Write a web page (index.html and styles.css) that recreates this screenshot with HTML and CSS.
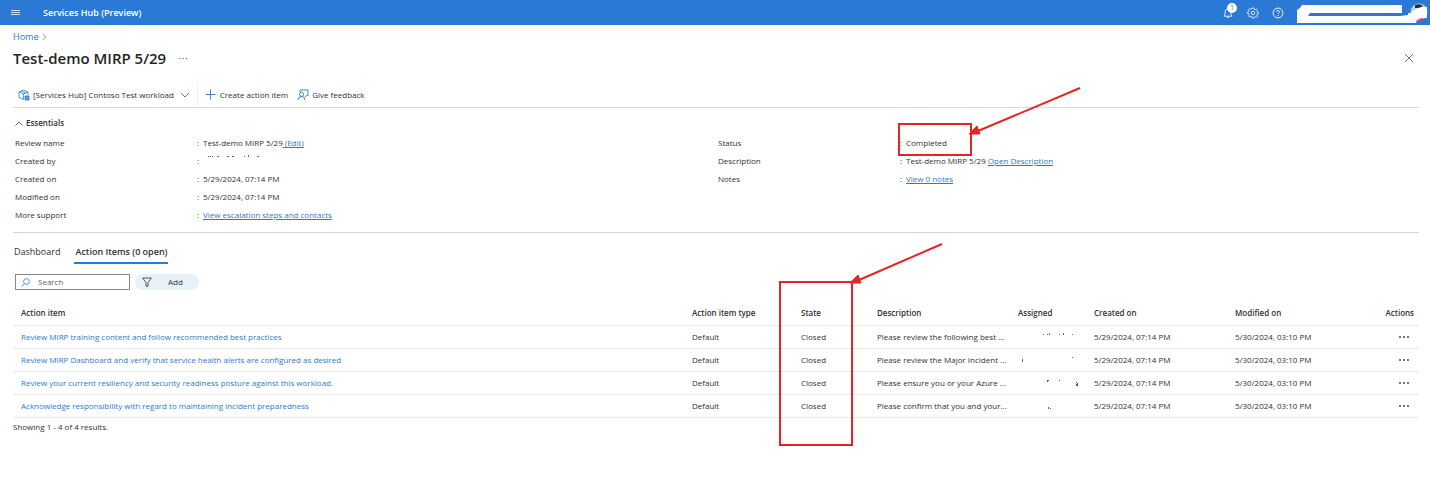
FILE: index.html
```html
<!DOCTYPE html>
<html lang="en">
<head>
    <meta charset="UTF-8">
    <meta name="viewport" content="width=device-width, initial-scale=1.0">
    <title>Services Hub (Preview)</title>
    <link rel="stylesheet" href="styles.css">
</head>
<body>
    <header class="topbar">
        <button class="icon-btn menu-btn" aria-label="Menu">
            <svg width="10" height="8" viewBox="0 0 10 8" stroke="#c9dff7" fill="none"><path d="M0 1.500h9M0 3.500h9M0 5.500h9"/></svg>
        </button>
        <span class="brand">Services Hub (Preview)</span>
        <div class="topbar-actions">
            <button class="icon-btn" aria-label="Notifications">
                <svg width="12" height="12" viewBox="0 0 12 12" stroke="#fff" fill="none" stroke-width=".8"><path d="M2 9.200h8L9 7.600V5A3 3 0 0 0 3 5v2.600zM4.800 9.400a1.200 1.200 0 0 0 2.400 0"/></svg>
                <span class="badge">1</span>
            </button>
            <button class="icon-btn" aria-label="Settings">
                <svg width="12" height="12" viewBox="0 0 12 12" stroke="#fff" fill="none" stroke-width=".8"><path d="M5.100 1h1.800l.3 1.400 1 .4 1.200-.8 1.200 1.200-.8 1.200.4 1 1.300.3v1.200l-1.300.3-.4 1 .8 1.200-1.200 1.200-1.200-.8-1 .4L6.900 11H5.100l-.3-1.400-1-.4-1.200.8L1.400 8.800l.8-1.200-.4-1L.5 6.300V5.100l1.300-.3.4-1-.8-1.200L2.600 1.400l1.200.8 1-.4z"/><circle cx="6" cy="6" r="1.700"/></svg>
            </button>
            <button class="icon-btn" aria-label="Help">
                <svg width="12" height="12" viewBox="0 0 12 12" stroke="#fff" fill="none" stroke-width=".9"><circle cx="6" cy="6" r="4.900"/><path d="M4.500 4.900C4.500 3 7.500 3 7.500 4.800 7.500 5.900 6 5.900 6 7.200M6 8.100v.9"/></svg>
            </button>
            <div class="account">
                <svg width="133" height="25" viewBox="0 0 133 25">
                    <circle cx="122" cy="12" r="8.500" fill="#b9d3dc"/>
                    <path d="M118 5q5-2 8 1l-3 2h-5z" fill="#22303a"/>
                    <path d="M122 17h4v4h-4z" fill="#c04a72"/>
                    <path d="M5 5h100v8H13l-2 3h92l8-1v-2h3l2-2 5-3 4-1h5v11h-4l-6 1-1 4H0V10l3-2z" fill="#fff"/>
                </svg>
            </div>
        </div>
    </header>

    <main class="page">
        <nav class="breadcrumb">
            <a href="#">Home</a>
            <svg width="5" height="8" viewBox="0 0 5 8" stroke="#777" fill="none" stroke-width=".8"><path d="M.6 1l3.200 3L.6 7"/></svg>
        </nav>

        <div class="title-row">
            <h1>Test-demo MIRP 5/29</h1>
            <button class="icon-btn" aria-label="More">
                <svg width="9" height="3" viewBox="0 0 9 3" fill="#666"><path d="M0 1h1.200v1H0zM3.400 1h1.200v1H3.400zM6.800 1H8v1H6.800z"/></svg>
            </button>
            <button class="icon-btn close-btn" aria-label="Close">
                <svg width="10" height="10" viewBox="0 0 10 10" stroke="#666" fill="none" stroke-width=".9"><path d="M1 1l8 8M9 1L1 9"/></svg>
            </button>
        </div>

        <div class="toolbar">
            <button class="tool workload">
                <svg width="12" height="12" viewBox="0 0 12 12" stroke="#2b79d3" fill="none" stroke-width=".8"><path d="M6 10.500L1 8.500V3L5.500 1 10 3v3M1 3l4.500 2L10 3M5.500 5v5M3 2l4.500 2"/><path d="M7 7h4v4H7z" fill="#5d9ce6"/></svg>
                <span>[Services Hub] Contoso Test workload</span>
                <svg width="10" height="6" viewBox="0 0 10 6" stroke="#666" fill="none" stroke-width=".9"><path d="M1 1l4 4 4-4"/></svg>
            </button>
            <button class="tool">
                <svg width="12" height="12" viewBox="0 0 12 12" stroke="#2b79d3" fill="none" stroke-width=".9"><path d="M5.500.500v10M.500 5.500h10"/></svg>
                <span>Create action item</span>
            </button>
            <button class="tool">
                <svg width="12" height="12" viewBox="0 0 12 12" stroke="#2b79d3" fill="none" stroke-width=".9"><path d="M3 3V1h8v5.500H9.500L8 8M1 11q0-3.500 3.500-3.500T8 11"/><circle cx="4.500" cy="5.300" r="2.100"/></svg>
                <span>Give feedback</span>
            </button>
        </div>

        <section class="essentials">
            <button class="essentials-toggle">
                <svg width="8" height="5" viewBox="0 0 8 5" stroke="#555" fill="none" stroke-width=".9"><path d="M.5 4.500L4 1l3.500 3.500"/></svg>
                <span>Essentials</span>
            </button>
            <div class="properties">
                <dl>
                    <div class="prop"><dt>Review name</dt><dd>Test-demo MIRP 5/29<a href="#"> (Edit)</a></dd></div>
                    <div class="prop"><dt>Created by</dt><dd><svg width="60" height="8" viewBox="0 0 60 8" fill="#666"><path d="M5 1h1v1H5zM7 1h1v1H7zM9 1h1v1H9zM14 1h2v1h-2zM24 1h2v1h-2zM29 1h2v1h-2zM41 1h1v1h-1zM45 0h1v2h-1zM54 1h2v1h-2z"/></svg></dd></div>
                    <div class="prop"><dt>Created on</dt><dd>5/29/2024, 07:14 PM</dd></div>
                    <div class="prop"><dt>Modified on</dt><dd>5/29/2024, 07:14 PM</dd></div>
                    <div class="prop"><dt>More support</dt><dd><a href="#">View escalation steps and contacts</a></dd></div>
                </dl>
                <dl>
                    <div class="prop marked">
                        <dt>Status</dt><dd>Completed</dd>
                        <svg class="mark mark-status" width="190" height="80" viewBox="0 0 190 80"><path d="M3 41h72v31H3z"/><path d="M184 5L82 48"/><path class="head" d="M73 51l8-8 3 8z"/></svg>
                    </div>
                    <div class="prop"><dt>Description</dt><dd>Test-demo MIRP 5/29 <a href="#">Open Description</a></dd></div>
                    <div class="prop"><dt>Notes</dt><dd><a href="#">View 0 notes</a></dd></div>
                </dl>
            </div>
        </section>

        <div class="tabs" role="tablist">
            <button class="tab" role="tab">Dashboard</button>
            <button class="tab active" role="tab" aria-selected="true">Action Items (0 open)</button>
        </div>

        <div class="filters">
            <label class="search">
                <svg width="9" height="9" viewBox="0 0 9 9" stroke="#2b79d3" fill="none" stroke-width=".8"><circle cx="5.500" cy="3.500" r="2.900"/><path d="M3.400 5.600L.5 8.500"/></svg>
                <input type="text" placeholder="Search" aria-label="Search">
            </label>
            <button class="add-filter">
                <svg width="10" height="10" viewBox="0 0 10 10" stroke="#333" fill="none" stroke-width=".8"><path d="M.6 1h8.800L6 5.500v3.700H4V5.500z"/></svg>
                <span>Add</span>
            </button>
        </div>

        <table class="items">
            <colgroup>
                <col class="col-item"><col class="col-type"><col class="col-state"><col class="col-desc">
                <col class="col-assigned"><col class="col-date"><col class="col-date"><col class="col-actions">
            </colgroup>
            <thead>
                <tr>
                    <th>Action item</th>
                    <th>Action item type</th>
                    <th class="marked">State
                        <svg class="mark mark-state" width="170" height="210" viewBox="0 0 170 210"><path d="M3 42h72v163H3z"/><path d="M165 4L82 40"/><path class="head" d="M73 43l8-8 3 8z"/></svg>
                    </th>
                    <th>Description</th>
                    <th>Assigned</th>
                    <th>Created on</th>
                    <th>Modified on</th>
                    <th>Actions</th>
                </tr>
            </thead>
            <tbody>
                <tr>
                    <td><a href="#">Review MIRP training content and follow recommended best practices</a></td>
                    <td>Default</td>
                    <td>Closed</td>
                    <td>Please review the following best ...</td>
                    <td><svg width="62" height="10" viewBox="0 0 62 10" fill="#666"><path d="M25 2h1v1h-1zM29 2h1v1h-1zM31 1h1v2h-1zM41 2h1v1h-1zM45 1h1v2h-1zM54 2h1v1h-1z"/></svg></td>
                    <td>5/29/2024, 07:14 PM</td>
                    <td>5/30/2024, 03:10 PM</td>
                    <td><button class="icon-btn" aria-label="Actions"><svg width="10" height="4" viewBox="0 0 10 4" fill="#333"><circle cx="1" cy="2" r=".9"/><circle cx="5" cy="2" r=".9"/><circle cx="9" cy="2" r=".9"/></svg></button></td>
                </tr>
                <tr>
                    <td><a href="#">Review MIRP Dashboard and verify that service health alerts are configured as desired</a></td>
                    <td>Default</td>
                    <td>Closed</td>
                    <td>Please review the Major Incident ...</td>
                    <td><svg width="62" height="10" viewBox="0 0 62 10" fill="#666"><path d="M4 4h1v3H4zM54 2h1v1h-1z"/></svg></td>
                    <td>5/29/2024, 07:14 PM</td>
                    <td>5/30/2024, 03:10 PM</td>
                    <td><button class="icon-btn" aria-label="Actions"><svg width="10" height="4" viewBox="0 0 10 4" fill="#333"><circle cx="1" cy="2" r=".9"/><circle cx="5" cy="2" r=".9"/><circle cx="9" cy="2" r=".9"/></svg></button></td>
                </tr>
                <tr>
                    <td><a href="#">Review your current resiliency and security readiness posture against this workload.</a></td>
                    <td>Default</td>
                    <td>Closed</td>
                    <td>Please ensure you or your Azure ...</td>
                    <td><svg width="62" height="10" viewBox="0 0 62 10" fill="#555"><path d="M29 2h2v1h-1v1h-1zM41 2h1v1h-1zM58 4h1v1h1v3h-2V6h1V5h-1z"/></svg></td>
                    <td>5/29/2024, 07:14 PM</td>
                    <td>5/30/2024, 03:10 PM</td>
                    <td><button class="icon-btn" aria-label="Actions"><svg width="10" height="4" viewBox="0 0 10 4" fill="#333"><circle cx="1" cy="2" r=".9"/><circle cx="5" cy="2" r=".9"/><circle cx="9" cy="2" r=".9"/></svg></button></td>
                </tr>
                <tr>
                    <td><a href="#">Acknowledge responsibility with regard to maintaining incident preparedness</a></td>
                    <td>Default</td>
                    <td>Closed</td>
                    <td>Please confirm that you and your...</td>
                    <td><svg width="62" height="10" viewBox="0 0 62 10" fill="#666"><path d="M30 6h1v2h-1zM32 7h1v1h-1z"/></svg></td>
                    <td>5/29/2024, 07:14 PM</td>
                    <td>5/30/2024, 03:10 PM</td>
                    <td><button class="icon-btn" aria-label="Actions"><svg width="10" height="4" viewBox="0 0 10 4" fill="#333"><circle cx="1" cy="2" r=".9"/><circle cx="5" cy="2" r=".9"/><circle cx="9" cy="2" r=".9"/></svg></button></td>
                </tr>
            </tbody>
        </table>
        <p class="results">Showing 1 - 4 of 4 results.</p>
    </main>
</body>
</html>
```
FILE: styles.css
```css
* {
    box-sizing: border-box;
}
body {
    margin: 0;
    min-height: 100vh;
    background: #fff;
    color: #323130;
    font-family: "Open Sans", "Noto Sans", sans-serif;
    font-size: 8px;
    line-height: 12px;
}
button {
    padding: 0;
    border: none;
    background: none;
    color: inherit;
    font: inherit;
    cursor: pointer;
}
svg {
    display: block;
    flex: none;
}
a {
    color: #2b79d3;
}
.icon-btn {
    display: flex;
    align-items: center;
    position: relative;
}
.topbar {
    display: flex;
    align-items: center;
    height: 25px;
    padding-left: 11px;
    background: #2a79d5;
    color: #fff;
}
.brand {
    margin-left: 22px;
    font-size: 9px;
    font-weight: 600;
}
.topbar-actions {
    display: flex;
    align-items: center;
    gap: 13px;
    margin-left: auto;
}
.badge {
    position: absolute;
    top: -4px;
    left: 5px;
    width: 10px;
    height: 10px;
    border-radius: 5px;
    background: #fff;
    color: #2a79d5;
    font-size: 7px;
    line-height: 10px;
    text-align: center;
}
.page {
    padding: 0 11px 24px 13px;
}
.breadcrumb {
    display: flex;
    align-items: center;
    gap: 4px;
    height: 24px;
    font-size: 9px;
}
.breadcrumb a {
    text-decoration: none;
}
.title-row {
    display: flex;
    align-items: center;
    gap: 13px;
    height: 18px;
}
h1 {
    margin: 0;
    font-size: 15px;
    line-height: 18px;
    font-weight: 600;
    color: #252423;
}
.close-btn {
    margin-left: auto;
    margin-right: 5px;
}
.toolbar {
    display: flex;
    margin-top: 16px;
    padding-left: 5px;
    border-bottom: 1px solid #dcdcdc;
}
.tool {
    display: flex;
    align-items: center;
    gap: 3px;
    height: 24px;
    margin-right: 9px;
}
.workload {
    padding-right: 7px;
    border-right: 1px solid #eee;
    margin-right: 7px;
}
.workload svg:last-child {
    margin-left: 3px;
}
.essentials {
    padding-bottom: 8px;
    border-bottom: 1px solid #d6d6d6;
}
.essentials-toggle {
    display: flex;
    align-items: center;
    gap: 3px;
    margin: 9px 0 5px 2px;
    font-weight: 600;
}
.properties {
    display: grid;
    grid-template-columns: 1fr 1fr;
}
dl {
    margin: 0;
    padding-left: 2px;
}
.prop {
    display: flex;
    align-items: center;
    height: 18px;
}
dt {
    width: 182px;
}
dt,
dd {
    margin: 0;
}
dd {
    display: flex;
    white-space: pre-wrap;
}
dd::before {
    content: ":";
    width: 6px;
}
.marked {
    position: relative;
}
.mark {
    position: absolute;
    fill: none;
    stroke: #e32526;
    stroke-width: 2;
    pointer-events: none;
}
.mark .head {
    fill: #e32526;
    stroke-width: 1;
}
.mark-status {
    top: -51px;
    left: 178px;
}
.mark-state {
    top: -61px;
    left: -16px;
}
.tabs {
    display: flex;
    gap: 14px;
    margin-top: 9px;
    padding-left: 1px;
}
.tab {
    height: 22px;
    border-bottom: 2px solid transparent;
    font-size: 9px;
}
.tab.active {
    padding: 0 1px;
    border-bottom-color: #2a79d5;
    font-weight: 600;
}
.filters {
    display: flex;
    gap: 5px;
    margin-top: 10px;
    padding-left: 2px;
}
.search {
    display: flex;
    align-items: center;
    gap: 8px;
    width: 115px;
    height: 16px;
    padding-left: 5px;
    border: 1px solid #8a8886;
}
.search input {
    width: 80px;
    padding: 0;
    border: none;
    outline: none;
    font: inherit;
}
.search input::placeholder {
    color: #605e5c;
}
.add-filter {
    display: flex;
    align-items: center;
    gap: 16px;
    width: 64px;
    height: 16px;
    padding-left: 7px;
    border-radius: 8px;
    background: #e6f1fa;
}
.items {
    width: 100%;
    margin-top: 11px;
    border-collapse: separate;
    border-spacing: 0;
    table-layout: fixed;
}
.col-type {
    width: 109px;
}
.col-state,
.col-assigned {
    width: 76px;
}
.col-desc,
.col-date {
    width: 141px;
}
.col-actions {
    width: 51px;
}
.items th,
.items td {
    height: 23px;
    padding: 0 0 0 8px;
    border-bottom: 1px solid #e9e9e9;
    text-align: left;
    white-space: nowrap;
}
.items td {
    padding-bottom: 1px;
}
.items th {
    height: 25px;
    font-weight: 600;
}
.items td a {
    text-decoration: none;
}
.items th:last-child {
    padding-right: 5px;
    text-align: right;
}
.items td .icon-btn {
    margin-left: 23px;
}
.results {
    margin: 3px 0 0;
}
```
